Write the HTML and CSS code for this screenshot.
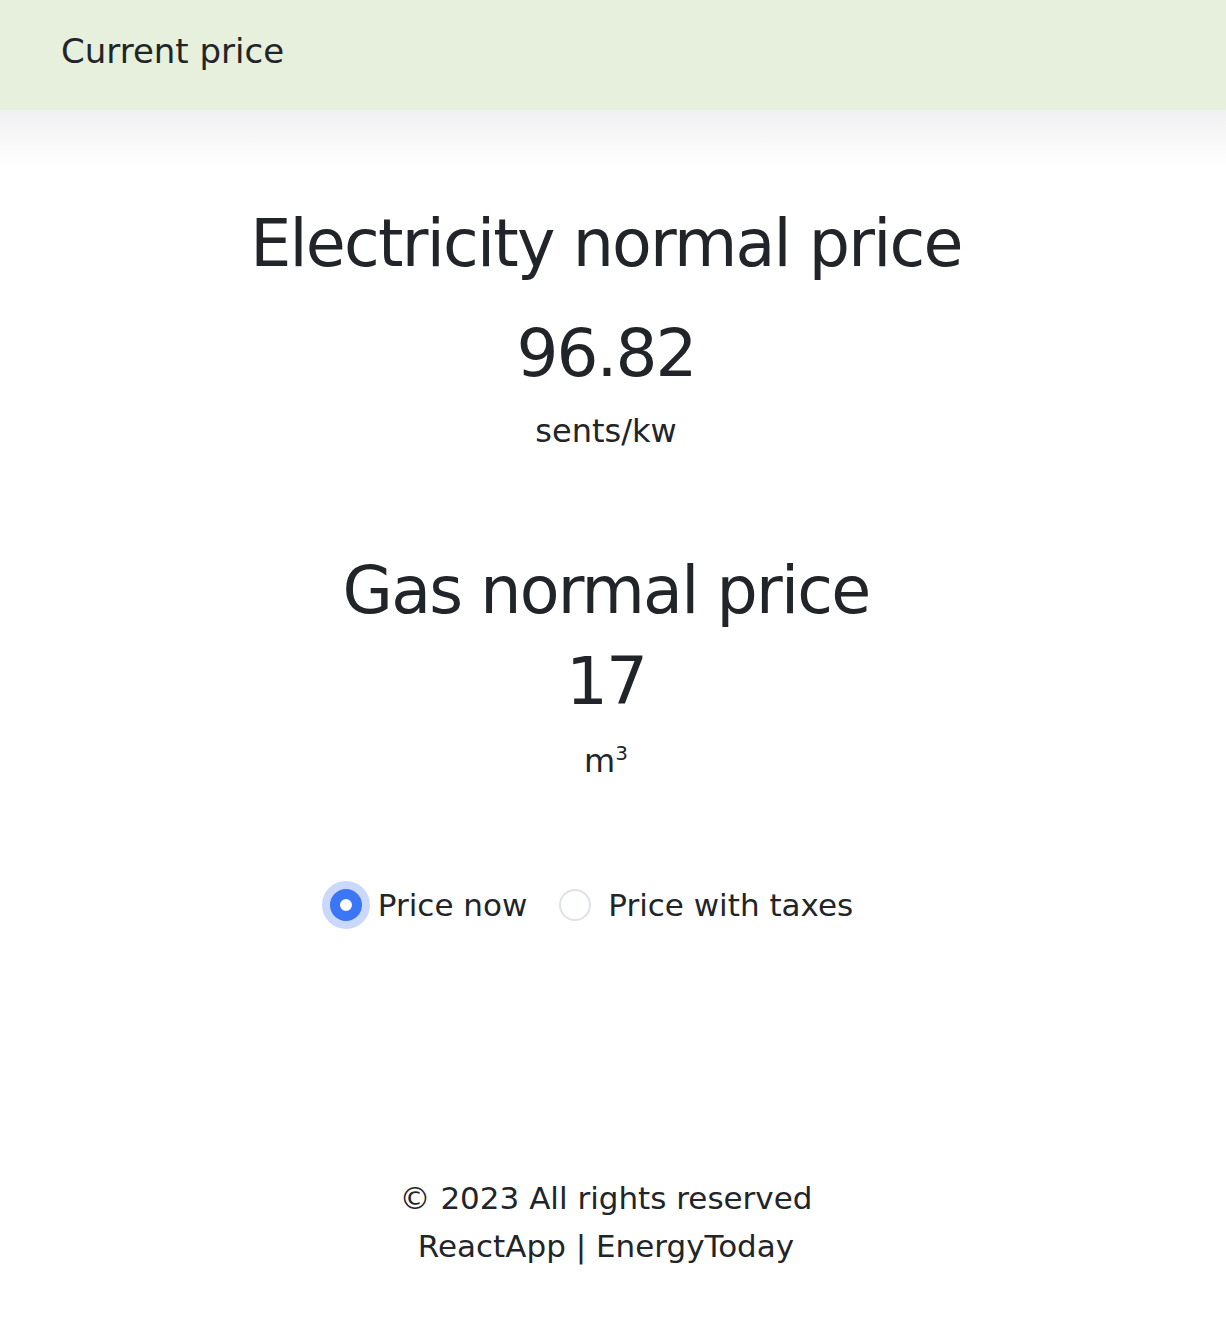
FILE: index.html
```html
<!DOCTYPE html>
<html>
<head>
<meta charset="utf-8">
<link rel="stylesheet" href="styles.css">
</head>
<body>
<header class="topbar"><span class="brand">Current price</span></header>
<div class="fade"></div>
<main class="content">
  <section class="price">
    <h1 class="title">Electricity normal price</h1>
    <div class="value">96.82</div>
    <div class="unit">sents/kw</div>
  </section>
  <section class="price gas">
    <h1 class="title">Gas normal price</h1>
    <div class="value">17</div>
    <div class="unit">m<sup>3</sup></div>
  </section>
  <div class="radios">
    <label class="opt"><span class="radio checked"></span><span>Price now</span></label>
    <label class="opt"><span class="radio"></span><span>Price with taxes</span></label>
  </div>
</main>
<footer class="foot">
  <div>© 2023 All rights reserved</div>
  <div>ReactApp | EnergyToday</div>
</footer>
</body>
</html>
```
FILE: styles.css
```css
html, body { margin: 0; padding: 0; background: #fff; }
body { font-family: "DejaVu Sans", sans-serif; color: #212529; width: 1226px; height: 1344px; overflow: hidden; position: relative; }
.topbar { height: 110px; background: #e7f0dc; display: flex; align-items: center; padding-left: 61px; box-sizing: border-box; }
.brand { font-size: 34px; line-height: 1; position: relative; top: -4px; }
.fade { height: 58px; background: linear-gradient(#f0f0f2, #ffffff); }
.content { display: flex; flex-direction: column; align-items: center; padding-right: 14px; }
.price { display: flex; flex-direction: column; align-items: center; }
.title { margin: 0; font-weight: 400; font-size: 65px; line-height: 1; margin-top: 43px; letter-spacing: -1.75px; }
.value { font-size: 66px; line-height: 1; margin-top: 45px; letter-spacing: -2px; }
.unit { font-size: 32px; line-height: 1; margin-top: 28px; }
.unit sup { font-size: 20px; }
.gas .title { margin-top: 111px; }
.gas .value { margin-top: 26px; }
.gas .unit { margin-top: 28px; }
.radios { display: flex; gap: 32px; margin-top: 110px; margin-right: 29px; font-size: 31px; }
.opt { display: flex; align-items: center; gap: 16px; }
.opt + .opt { gap: 17px; }
.radio { width: 32px; height: 32px; border-radius: 50%; border: 2px solid #dee2e6; box-sizing: border-box; background: #fff; }
.radio.checked { border: 10px solid #3a76f6; box-shadow: 0 0 0 8px #c9d8fb; }
.foot { position: absolute; left: 0; right: 14px; top: 1174px; text-align: center; font-size: 31px; line-height: 48px; }
```
